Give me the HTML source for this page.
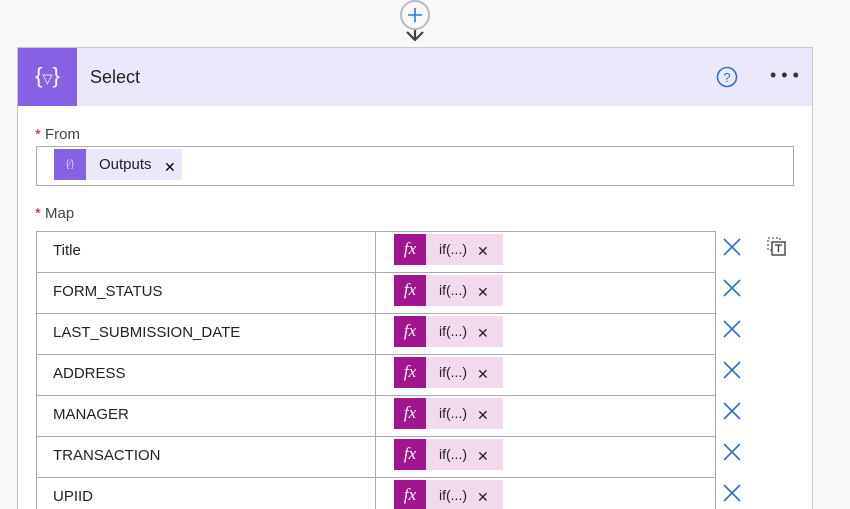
<!DOCTYPE html>
<html style="width:850px;height:509px;overflow:hidden"><head><style>
body{margin:0;width:850px;height:509px;background:#f8f8f8;font-family:"Liberation Sans",sans-serif;position:relative;overflow:hidden}
.card{position:absolute;left:17px;top:47px;width:794px;height:462px;background:#fff;border:1px solid #c8c8c8;border-bottom:none;overflow:hidden}
.hdr{position:absolute;left:0;top:0;width:794px;height:58px;background:#ebe8fc}
.ico{position:absolute;left:0;top:0;width:59px;height:58px;background:#8661e6;color:#fff;font-size:22px;text-align:center;line-height:56px}
.title{position:absolute;left:72px;top:19px;font-size:18px;color:#222}
.lbl{position:absolute;font-size:15px;color:#444}
.lbl b{color:#a4262c;font-weight:normal}
.inp{position:absolute;left:18px;top:98px;width:756px;height:38px;border:1px solid #aaa}
.row{position:absolute;left:18px;width:678px;height:40px;border:1px solid #aaa;border-bottom:none}
.row .k{position:absolute;left:0;top:0;width:339px;height:40px;border-right:1px solid #aaa;font-size:15px;color:#222;line-height:38px;padding-left:16px;box-sizing:border-box}
.tok{position:absolute;left:357px;top:2px;width:109px;height:31px;background:#f2d9ee;font-size:14px;color:#222}
.tok .f{position:absolute;left:0;top:0;width:32px;height:31px;background:#a0168f;color:#fff;font:italic 17px "Liberation Serif",serif;text-align:center;line-height:29px}
.tok .t{position:absolute;left:45px;top:7px}
.tok .x{position:absolute;left:83px;top:9px;font-size:14px}
.del{position:absolute;left:704px;width:20px;height:20px}
</style></head><body>
<svg style="position:absolute;left:399px;top:0" width="32" height="48"><circle cx="16" cy="15" r="14" fill="#f8f8f8" stroke="#bbb" stroke-width="2"/><path d="M16 8v14M9 15h14" stroke="#2f7bd5" stroke-width="1.6"/><path d="M8 32l8 8 8-8M16 30v10" stroke="#444" stroke-width="2.2" fill="none"/></svg>
<div class="card">
<div class="hdr"><div class="ico">{<span style="font-size:13px">▽</span>}</div><div class="title">Select</div>
<svg style="position:absolute;left:698px;top:18px" width="22" height="22"><circle cx="11" cy="11" r="9.5" fill="none" stroke="#2f6fd0" stroke-width="1.6"/><text x="11" y="16" font-size="13" text-anchor="middle" fill="#2f6fd0" font-family="Liberation Sans">?</text></svg>
<div style="position:absolute;left:752px;top:17px;font-size:18px;letter-spacing:5px;color:#333">•••</div></div>
<div class="lbl" style="left:17px;top:78px"><b>*</b> From</div>
<div class="inp"><div style="position:absolute;left:17px;top:2px;width:128px;height:31px;background:#ebe8fc"><div style="position:absolute;left:0;top:0;width:32px;height:31px;background:#8661e6;color:#d8ccff;font-size:10px;text-align:center;line-height:31px">{∕}</div><span style="position:absolute;left:45px;top:7px;font-size:15px;color:#222">Outputs</span><span style="position:absolute;left:110px;top:10px;font-size:14px">✕</span></div></div>
<div class="lbl" style="left:17px;top:157px"><b>*</b> Map</div>
<div class="row" style="top:183px"><div class="k">Title</div><div class="tok"><div class="f">fx</div><span class="t">if(...)</span><span class="x">✕</span></div></div>
<div class="row" style="top:224px"><div class="k">FORM_STATUS</div><div class="tok"><div class="f">fx</div><span class="t">if(...)</span><span class="x">✕</span></div></div>
<div class="row" style="top:265px"><div class="k">LAST_SUBMISSION_DATE</div><div class="tok"><div class="f">fx</div><span class="t">if(...)</span><span class="x">✕</span></div></div>
<div class="row" style="top:306px"><div class="k">ADDRESS</div><div class="tok"><div class="f">fx</div><span class="t">if(...)</span><span class="x">✕</span></div></div>
<div class="row" style="top:347px"><div class="k">MANAGER</div><div class="tok"><div class="f">fx</div><span class="t">if(...)</span><span class="x">✕</span></div></div>
<div class="row" style="top:388px"><div class="k">TRANSACTION</div><div class="tok"><div class="f">fx</div><span class="t">if(...)</span><span class="x">✕</span></div></div>
<div class="row" style="top:429px;height:40px"><div class="k">UPIID</div><div class="tok"><div class="f">fx</div><span class="t">if(...)</span><span class="x">✕</span></div></div>
<svg class="del" style="top:189px"><path d="M2 2l16 16M18 2L2 18" stroke="#2f6fd0" stroke-width="1.6"/></svg>
<svg class="del" style="top:230px"><path d="M2 2l16 16M18 2L2 18" stroke="#2f6fd0" stroke-width="1.6"/></svg>
<svg class="del" style="top:271px"><path d="M2 2l16 16M18 2L2 18" stroke="#2f6fd0" stroke-width="1.6"/></svg>
<svg class="del" style="top:312px"><path d="M2 2l16 16M18 2L2 18" stroke="#2f6fd0" stroke-width="1.6"/></svg>
<svg class="del" style="top:353px"><path d="M2 2l16 16M18 2L2 18" stroke="#2f6fd0" stroke-width="1.6"/></svg>
<svg class="del" style="top:394px"><path d="M2 2l16 16M18 2L2 18" stroke="#2f6fd0" stroke-width="1.6"/></svg>
<svg class="del" style="top:435px"><path d="M2 2l16 16M18 2L2 18" stroke="#2f6fd0" stroke-width="1.6"/></svg>
<svg style="position:absolute;left:748px;top:188px" width="22" height="22"><rect x="2" y="2" width="12" height="12" fill="none" stroke="#333" stroke-dasharray="2 2"/><rect x="6" y="6" width="13" height="13" fill="#fff" stroke="#333" stroke-width="1.3"/><path d="M9 9h7M12.5 9v7" stroke="#333" stroke-width="1.3"/></svg>
</div>
</body></html>
